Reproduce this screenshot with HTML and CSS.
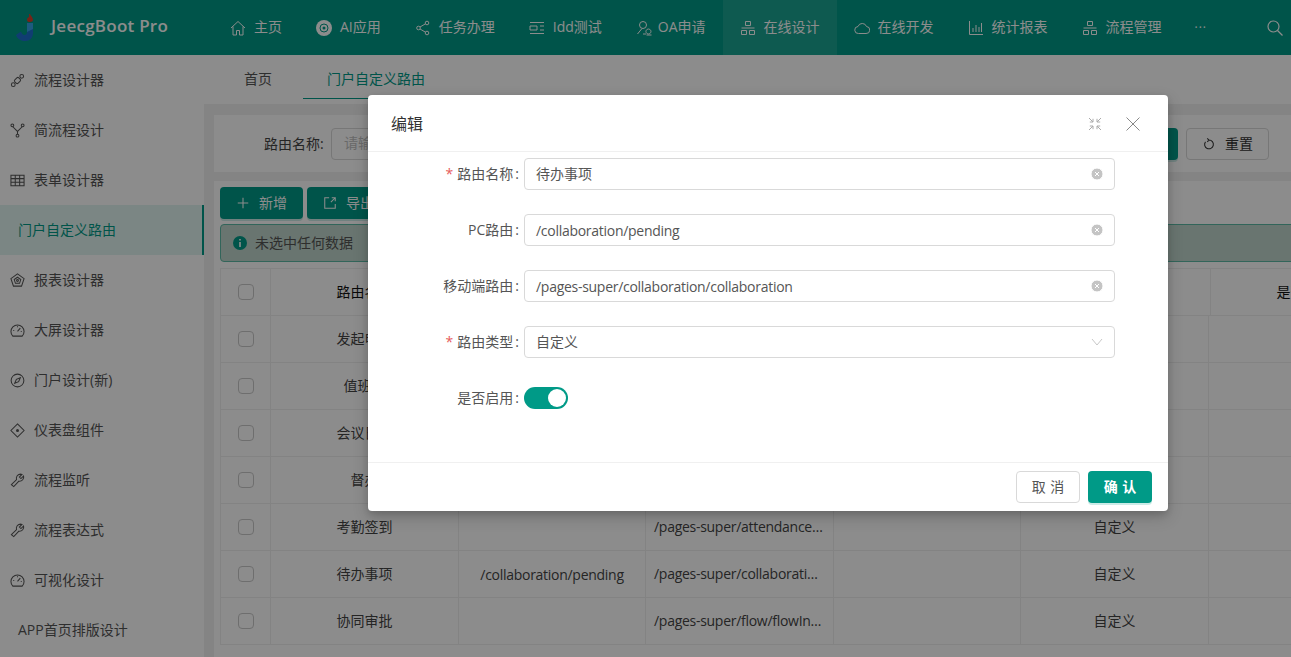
FILE: index.html
```html
<!DOCTYPE html>
<html lang="zh-CN">
<head>
    <meta charset="UTF-8">
    <meta name="viewport" content="width=device-width, initial-scale=1.0">
    <title>门户自定义路由</title>
    <link rel="stylesheet" href="styles.css">
</head>
<body>
    <div class="app">
        <header class="topbar">
            <div class="logo">
                <svg class="logo-mark" viewBox="0 0 18 27">
                    <path d="M14 0c.4 1.500 3 3.500 3 5.800C17 7.300 15.800 8 14 8s-3-.8-3-2.300c0-1.200.8-1.800 1.200-2.800.3.300.5.600.8.700.3-1 .3-2.200 0-3.600z" fill="#d8402a"/>
                    <path d="M11 9h6v10c0 5-3.500 8-7.500 8C5 27 1.500 25 0 21l5-3.500c.7 2 1.800 3.500 3.300 3.500 1.800 0 2.700-1.300 2.700-3z" fill="#1e6fd0"/>
                    <path d="M11 9h6v6l-6 3z" fill="#35a4e8"/>
                </svg>
                <span>JeecgBoot Pro</span>
            </div>
            <nav class="nav">
                <a class="nav-item">
                    <svg viewBox="0 0 16 16"><path d="M1 8l7-6.500L15 8M3 6.500V15h3.500v-4.500h3V15H13V6.500"/></svg>
                    <span>主页</span>
                </a>
                <a class="nav-item">
                    <svg viewBox="0 0 16 16"><circle class="solid" cx="8" cy="8" r="8"/><circle class="ring" cx="8" cy="8" r="4"/><circle class="cut" cx="8" cy="8" r="1.500"/></svg>
                    <span>AI应用</span>
                </a>
                <a class="nav-item">
                    <svg viewBox="0 0 16 16"><circle cx="3.500" cy="8" r="1.800"/><circle cx="12" cy="3" r="1.800"/><circle cx="12" cy="13" r="1.800"/><path d="M5 7l5.500-3.200M5 9l5.500 3.200"/></svg>
                    <span>任务办理</span>
                </a>
                <a class="nav-item">
                    <svg viewBox="0 0 16 16"><path d="M1 2.500h14M1 13.500h14M1 6h7v4H1zM11 6h4M11 10h4"/></svg>
                    <span>Idd测试</span>
                </a>
                <a class="nav-item tight">
                    <svg viewBox="0 0 16 16"><circle cx="7" cy="5" r="3.500"/><path d="M6 8.500L1.500 14M7 14h3M12.500 9a2.500 2.500 0 1 1-.1 0zM10.500 15h5"/></svg>
                    <span>OA申请</span>
                </a>
                <a class="nav-item active">
                    <svg viewBox="0 0 16 16"><path d="M5.500 1.500h5v4h-5zM1.500 10.500h5v4h-5zM9.500 10.500h5v4h-5zM1.500 8h13"/></svg>
                    <span>在线设计</span>
                </a>
                <a class="nav-item">
                    <svg viewBox="0 0 16 16"><path d="M4.500 13.500a3.500 3.500 0 0 1-.5-7 4.500 4.500 0 0 1 8.500 0 3.500 3.500 0 0 1-.5 7z"/></svg>
                    <span>在线开发</span>
                </a>
                <a class="nav-item">
                    <svg viewBox="0 0 16 16"><path d="M1.500 1v13.500H15M5 12V8M8 12V5M11 12V7M13.500 12V3"/></svg>
                    <span>统计报表</span>
                </a>
                <a class="nav-item">
                    <svg viewBox="0 0 16 16"><path d="M5.500 1.500h5v4h-5zM1.500 10.500h5v4h-5zM9.500 10.500h5v4h-5zM1.500 8h13"/></svg>
                    <span>流程管理</span>
                </a>
                <a class="nav-item more">···</a>
            </nav>
            <svg class="top-search" viewBox="0 0 16 16"><circle cx="6.500" cy="6.500" r="5.500"/><path d="M10.500 10.500L15.500 15.500"/></svg>
        </header>

        <div class="layout">
            <aside class="sidebar">
                <a class="side-item">
                    <svg viewBox="0 0 16 16"><circle cx="3.500" cy="12.500" r="2"/><circle cx="12.500" cy="3.500" r="2"/><rect x="5" y="5.500" width="6" height="5" rx="1.500" transform="rotate(-45 8 8)"/></svg>
                    <span>流程设计器</span>
                </a>
                <a class="side-item">
                    <svg viewBox="0 0 16 16"><circle cx="2.500" cy="2.500" r="1.500"/><circle cx="13.500" cy="2.500" r="1.500"/><circle cx="8" cy="13.500" r="1.500"/><path d="M3 4l5 5 5-5M8 9v3"/></svg>
                    <span>简流程设计</span>
                </a>
                <a class="side-item">
                    <svg viewBox="0 0 16 16"><path d="M1 2.500h14v11H1zM1 6h14M1 9.800h14M5.600 2.500v11M10.300 2.500v11"/></svg>
                    <span>表单设计器</span>
                </a>
                <a class="side-item active"><span>门户自定义路由</span></a>
                <a class="side-item">
                    <svg viewBox="0 0 16 16"><path d="M8 1l7 5-2.700 8H3.700L1 6zM8 4.500l3.500 2.500-1.300 4H5.800L4.500 7z"/><circle cx="8" cy="8" r="1"/></svg>
                    <span>报表设计器</span>
                </a>
                <a class="side-item">
                    <svg viewBox="0 0 16 16"><path d="M3 14a7 7 0 1 1 10 0zM8 9l3-3.500M3.500 8h1M11.500 9h1M8 3.500v1"/></svg>
                    <span>大屏设计器</span>
                </a>
                <a class="side-item">
                    <svg viewBox="0 0 16 16"><circle cx="8" cy="8" r="6.800"/><path d="M11 5l-1.800 4.200L5 11l1.800-4.200z"/></svg>
                    <span>门户设计(新)</span>
                </a>
                <a class="side-item">
                    <svg viewBox="0 0 16 16"><path d="M8 1l7 7-7 7-7-7z"/><circle class="solid" cx="8" cy="8" r="1.600"/></svg>
                    <span>仪表盘组件</span>
                </a>
                <a class="side-item">
                    <svg viewBox="0 0 16 16"><path d="M1.500 12.500L7 7c-.8-2.500.8-5.500 4-5.800.7 0 1.300.1 1.800.3L10 4.300l1.700 1.700 2.800-2.800c.7 3-1.500 5.800-5 5.500L4 14.500z"/></svg>
                    <span>流程监听</span>
                </a>
                <a class="side-item">
                    <svg viewBox="0 0 16 16"><path d="M1.500 12.500L7 7c-.8-2.500.8-5.500 4-5.800.7 0 1.300.1 1.800.3L10 4.300l1.700 1.700 2.800-2.800c.7 3-1.500 5.800-5 5.500L4 14.500z"/></svg>
                    <span>流程表达式</span>
                </a>
                <a class="side-item">
                    <svg viewBox="0 0 16 16"><path d="M3 14a7 7 0 1 1 10 0zM8 9l3-3.500M3.500 8h1M11.500 9h1M8 3.500v1"/></svg>
                    <span>可视化设计</span>
                </a>
                <a class="side-item"><span>APP首页排版设计</span></a>
            </aside>

            <main class="main">
                <div class="tabs">
                    <div class="tab">首页</div>
                    <div class="tab current">门户自定义路由</div>
                </div>
                <div class="content">
                    <form class="search-card">
                        <label class="search-label">路由名称:</label>
                        <div class="search-input">请输入路由名称</div>
                        <button type="button" class="btn btn-primary search-btn"><span>查询</span></button>
                        <button type="button" class="btn btn-plain">
                            <svg viewBox="0 0 16 16"><path d="M8 3.500a5 5 0 1 1-4 2M8 3.500L6 1.500M8 3.500L6 5.500"/></svg>
                            <span>重置</span>
                        </button>
                    </form>
                    <section class="table-card">
                        <div class="toolbar">
                            <button type="button" class="btn btn-primary">
                                <svg viewBox="0 0 16 16"><path d="M8 2v12M2 8h12"/></svg>
                                <span>新增</span>
                            </button>
                            <button type="button" class="btn btn-primary">
                                <svg viewBox="0 0 16 16"><path d="M14 9v5H2V2h5M9 7l5-5M10 2h4v4"/></svg>
                                <span>导出</span>
                            </button>
                        </div>
                        <div class="alert">
                            <svg viewBox="0 0 14 14"><circle cx="7" cy="7" r="7"/><path d="M6.200 3h1.600v1.600H6.200zM6.200 6h1.600v5H6.200z"/></svg>
                            <span>未选中任何数据</span>
                        </div>
                        <div class="table">
                            <div class="row row-head">
                                <div class="cell"><span class="checkbox"></span></div>
                                <div class="cell">路由名称</div>
                                <div class="cell">PC路由</div>
                                <div class="cell">移动端路由</div>
                                <div class="cell">图标</div>
                                <div class="cell">路由类型</div>
                                <div class="cell">是否启用</div>
                            </div>
                            <div class="row">
                                <div class="cell"><span class="checkbox"></span></div>
                                <div class="cell">发起申请</div>
                                <div class="cell"></div>
                                <div class="cell path">/pages-super/flow/start</div>
                                <div class="cell"></div>
                                <div class="cell">自定义</div>
                                <div class="cell"></div>
                            </div>
                            <div class="row">
                                <div class="cell"><span class="checkbox"></span></div>
                                <div class="cell">值班表</div>
                                <div class="cell"></div>
                                <div class="cell path">/pages-super/duty/index</div>
                                <div class="cell"></div>
                                <div class="cell">自定义</div>
                                <div class="cell"></div>
                            </div>
                            <div class="row">
                                <div class="cell"><span class="checkbox"></span></div>
                                <div class="cell">会议日程</div>
                                <div class="cell"></div>
                                <div class="cell path">/pages-super/meeting/index</div>
                                <div class="cell"></div>
                                <div class="cell">自定义</div>
                                <div class="cell"></div>
                            </div>
                            <div class="row">
                                <div class="cell"><span class="checkbox"></span></div>
                                <div class="cell">督办</div>
                                <div class="cell"></div>
                                <div class="cell path">/pages-super/supervise/index</div>
                                <div class="cell"></div>
                                <div class="cell">自定义</div>
                                <div class="cell"></div>
                            </div>
                            <div class="row">
                                <div class="cell"><span class="checkbox"></span></div>
                                <div class="cell">考勤签到</div>
                                <div class="cell"></div>
                                <div class="cell path">/pages-super/attendance/attendance</div>
                                <div class="cell"></div>
                                <div class="cell">自定义</div>
                                <div class="cell"></div>
                            </div>
                            <div class="row">
                                <div class="cell"><span class="checkbox"></span></div>
                                <div class="cell">待办事项</div>
                                <div class="cell latin">/collaboration/pending</div>
                                <div class="cell path">/pages-super/collaboration/collaboration</div>
                                <div class="cell"></div>
                                <div class="cell">自定义</div>
                                <div class="cell"></div>
                            </div>
                            <div class="row">
                                <div class="cell"><span class="checkbox"></span></div>
                                <div class="cell">协同审批</div>
                                <div class="cell"></div>
                                <div class="cell path">/pages-super/flow/flowIndexPage</div>
                                <div class="cell"></div>
                                <div class="cell">自定义</div>
                                <div class="cell"></div>
                            </div>
                        </div>
                    </section>
                </div>
            </main>
        </div>

        <div class="mask"></div>

        <div class="modal">
            <div class="modal-head">
                <h2>编辑</h2>
                <svg class="modal-icon expand" viewBox="0 0 14 14"><path d="M1 1l4 4M1.800 5H5V1.800M13 1L9 5M12.200 5H9V1.800M1 13l4-4M1.800 9H5v3.200M13 13L9 9M12.200 9H9v3.200"/></svg>
                <svg class="modal-icon" viewBox="0 0 14 14"><path d="M.5.500l13 13M13.500.500l-13 13"/></svg>
            </div>
            <div class="modal-body">
                <div class="form-row">
                    <label class="required">路由名称</label>
                    <div class="field">
                        <span class="cjk">待办事项</span>
                        <svg class="clear" viewBox="0 0 12 12"><circle cx="6" cy="6" r="6"/><path d="M4 4l4 4M8 4l-4 4"/></svg>
                    </div>
                </div>
                <div class="form-row">
                    <label>PC路由</label>
                    <div class="field">
                        <span class="latin">/collaboration/pending</span>
                        <svg class="clear" viewBox="0 0 12 12"><circle cx="6" cy="6" r="6"/><path d="M4 4l4 4M8 4l-4 4"/></svg>
                    </div>
                </div>
                <div class="form-row">
                    <label>移动端路由</label>
                    <div class="field">
                        <span class="latin">/pages-super/collaboration/collaboration</span>
                        <svg class="clear" viewBox="0 0 12 12"><circle cx="6" cy="6" r="6"/><path d="M4 4l4 4M8 4l-4 4"/></svg>
                    </div>
                </div>
                <div class="form-row">
                    <label class="required">路由类型</label>
                    <div class="field">
                        <span class="cjk">自定义</span>
                        <svg class="arrow" viewBox="0 0 12 8"><path d="M1 1l5 6 5-6"/></svg>
                    </div>
                </div>
                <div class="form-row">
                    <label>是否启用</label>
                    <div class="switch"><i></i></div>
                </div>
            </div>
            <div class="modal-foot">
                <button type="button" class="btn btn-cancel"><span>取 消</span></button>
                <button type="button" class="btn btn-ok"><span>确 认</span></button>
            </div>
        </div>
    </div>
</body>
</html>
```

FILE: styles.css
```css
* {
    margin: 0;
    padding: 0;
    box-sizing: border-box;
    font-family: "Open Sans", "Noto Sans CJK SC", sans-serif;
}

html, body {
    height: 100%;
    overflow: hidden;
}

body {
    background-color: #fff;
    font-size: 14px;
    color: #333;
}

.app {
    position: relative;
    height: 657px;
    overflow: hidden;
}

/* 西文字宽收窄一点，接近原图 */
.latin {
    letter-spacing: -0.28px;
}

/* 顶部导航 */
.topbar {
    display: flex;
    align-items: center;
    height: 55px;
    background-color: #009a87;
    color: #fff;
}

.logo {
    display: flex;
    align-items: center;
    gap: 17px;
    width: 213px;
    padding-left: 16px;
    font-size: 17px;
    font-weight: 600;
    letter-spacing: 0.25px;
}

.logo span {
    margin-bottom: 4px;
}

.logo-mark {
    width: 18px;
    height: 27px;
}

.nav {
    display: flex;
    height: 100%;
}

.nav-item {
    display: flex;
    align-items: center;
    gap: 8px;
    height: 100%;
    padding: 0 17px;
}

.nav-item span {
    margin-bottom: 3px;
}

.nav-item.tight {
    gap: 6px;
}

.nav-item svg {
    width: 16px;
    height: 16px;
    fill: none;
    stroke: #fff;
    stroke-width: 1;
}

.nav-item svg .solid {
    fill: #fff;
    stroke: none;
}

.nav-item svg .ring {
    stroke: #009a87;
}

.nav-item svg .cut {
    fill: #009a87;
    stroke: none;
}

.nav-item.active {
    background-color: #1aa493;
}

.nav-item.more {
    padding-left: 16px;
    font-size: 12px;
    letter-spacing: 1px;
}

.top-search {
    width: 16px;
    height: 16px;
    margin-left: auto;
    margin-right: 8px;
    fill: none;
    stroke: #fff;
    stroke-width: 1.2;
}

.layout {
    display: flex;
    height: 602px;
}

/* 左侧菜单 */
.sidebar {
    flex: none;
    width: 204px;
    background-color: #fff;
}

.side-item {
    display: flex;
    align-items: center;
    gap: 9px;
    height: 50px;
    padding-left: 10px;
    color: #555;
}

.side-item span {
    margin-bottom: 2px;
}

.side-item svg {
    width: 15px;
    height: 15px;
    fill: none;
    stroke: #555;
    stroke-width: 1.1;
}

.side-item svg .solid {
    fill: #555;
    stroke: none;
}

.side-item.active {
    padding-left: 18px;
    background-color: #e0f5f0;
    border-right: 2px solid #009a87;
    color: #009a87;
}

.side-item:last-child {
    padding-left: 18px;
}

.main {
    flex: 1;
    min-width: 0;
}

/* 标签页 */
.tabs {
    display: flex;
    gap: 7px;
    height: 49px;
    padding-left: 16px;
    background-color: #fff;
}

.tab {
    height: 44px;
    padding: 0 24px;
    line-height: 47px;
    color: #555;
}

.tab.current {
    border-bottom: 1px solid #009a87;
    color: #009a87;
}

.content {
    height: 553px;
    padding: 11px 0 0 10px;
    background-color: #f0f0f0;
}

/* 搜索区 */
.search-card {
    display: flex;
    align-items: center;
    height: 57px;
    padding-left: 50px;
    background-color: #fff;
}

.search-label {
    width: 67px;
    margin-bottom: 2px;
    color: #444;
}

.search-input {
    width: 250px;
    height: 32px;
    padding-left: 12px;
    border: 1px solid #d9d9d9;
    border-radius: 4px;
    line-height: 28px;
    color: #bfbfbf;
}

.search-btn {
    margin-left: auto;
    width: 83px;
}

.btn {
    display: inline-flex;
    align-items: center;
    justify-content: center;
    gap: 9px;
    height: 32px;
    border-radius: 4px;
    font-size: 14px;
    border: 1px solid transparent;
}

.btn span {
    margin-bottom: 2px;
}

.btn svg {
    width: 14px;
    height: 14px;
    fill: none;
    stroke: currentColor;
    stroke-width: 1.2;
}

.btn-primary {
    background-color: #009a87;
    color: #fff;
    box-shadow: 0 2px 0 rgba(0, 154, 135, 0.2);
}

.btn-plain {
    width: 83px;
    margin-left: 8px;
    margin-right: 22px;
    background-color: #fff;
    border-color: #d9d9d9;
    color: #333;
}

/* 表格 */
.table-card {
    height: 485px;
    margin-top: 9px;
    padding: 6px 0 0 6px;
    background-color: #fff;
}

.toolbar {
    display: flex;
    gap: 4px;
}

.toolbar .btn {
    width: 83px;
}

.alert {
    display: flex;
    align-items: center;
    gap: 8px;
    height: 38px;
    margin-top: 5px;
    margin-right: -10px;
    padding-left: 12px;
    background-color: #c0d6cc;
    border: 1px solid #5cb8a4;
    border-radius: 4px;
    color: #555;
}

.alert span {
    margin-bottom: 2px;
}

.alert svg {
    width: 14px;
    height: 14px;
    fill: #009a87;
}

.alert svg path {
    fill: #fff;
}

.table {
    width: 1400px;
    margin-top: 6px;
    border-top: 1px solid #eee;
    border-left: 1px solid #eee;
}

.row {
    display: grid;
    grid-template-columns: 50px 188px 187px 188px 187px 188px 188px;
    height: 47px;
    border-bottom: 1px solid #eee;
}

.row-head {
    grid-template-columns: 50px 188px 188px 188px 188px 188px 188px;
    color: #111;
}

.cell {
    display: flex;
    align-items: center;
    justify-content: center;
    padding-bottom: 2px;
    border-right: 1px solid #eee;
    white-space: nowrap;
    overflow: hidden;
}

.cell:first-child {
    padding-bottom: 0;
}

.cell.latin {
    padding-bottom: 0;
}

.cell.path {
    display: block;
    padding: 0 8px;
    line-height: 46px;
    letter-spacing: -0.28px;
    text-overflow: ellipsis;
}

.row:not(.row-head) .cell {
    color: #444;
}

.checkbox {
    width: 16px;
    height: 16px;
    background-color: #fff;
    border: 1px solid #c8c8c8;
    border-radius: 4px;
}

/* 遮罩和弹窗 */
.mask {
    position: absolute;
    inset: 0;
    background-color: rgba(0, 0, 0, 0.45);
}

.modal {
    position: absolute;
    top: 95px;
    left: 368px;
    width: 800px;
    height: 416px;
    display: flex;
    flex-direction: column;
    background-color: #fff;
    border-radius: 4px;
    box-shadow: 0 6px 16px rgba(0, 0, 0, 0.18), 0 3px 6px rgba(0, 0, 0, 0.12);
}

.modal-head {
    display: flex;
    align-items: center;
    gap: 24px;
    height: 57px;
    padding: 0 28px 0 23px;
    border-bottom: 1px solid #f0f0f0;
}

.modal-head h2 {
    margin-right: auto;
    font-size: 16px;
    font-weight: 400;
    color: #333;
}

.modal-icon {
    width: 14px;
    height: 14px;
    margin-top: 2px;
    fill: none;
    stroke: #888;
    stroke-width: 1;
}

.modal-icon.expand {
    stroke: #aaa;
}

.modal-body {
    flex: 1;
    padding: 6px 53px 0 0;
}

.form-row {
    display: flex;
    align-items: center;
    height: 32px;
    margin-bottom: 24px;
}

.form-row label {
    flex: none;
    width: 156px;
    margin-bottom: 2px;
    padding-right: 5px;
    text-align: right;
    color: #555;
}

.form-row label::after {
    content: ":";
    margin-left: 2px;
}

.form-row label.required::before {
    content: "*";
    margin-right: 4px;
    color: #e65b5b;
}

.field {
    flex: 1;
    display: flex;
    align-items: center;
    justify-content: space-between;
    height: 32px;
    padding: 0 11px 0 11px;
    border: 1px solid #d9d9d9;
    border-radius: 4px;
    color: #555;
}

.field .cjk {
    margin-bottom: 2px;
}

.clear {
    width: 12px;
    height: 12px;
    fill: #c4c4c4;
    stroke: #fff;
    stroke-width: 1;
}

.arrow {
    width: 12px;
    height: 8px;
    fill: none;
    stroke: #c8c8c8;
    stroke-width: 1;
}

.switch {
    display: flex;
    justify-content: flex-end;
    align-items: center;
    width: 44px;
    height: 22px;
    padding-right: 2px;
    background-color: #009a87;
    border-radius: 11px;
}

.switch i {
    width: 18px;
    height: 18px;
    background-color: #fff;
    border-radius: 50%;
}

.modal-foot {
    display: flex;
    justify-content: flex-end;
    gap: 8px;
    height: 49px;
    padding: 8px 16px;
    border-top: 1px solid #f0f0f0;
}

.btn-cancel {
    width: 64px;
    background-color: #fff;
    border-color: #d9d9d9;
    color: #555;
    word-spacing: 1px;
}

.btn-ok {
    width: 64px;
    background-color: #009a87;
    color: #fff;
    font-weight: 700;
    word-spacing: 1px;
    box-shadow: 0 2px 0 rgba(0, 154, 135, 0.2);
}
```
